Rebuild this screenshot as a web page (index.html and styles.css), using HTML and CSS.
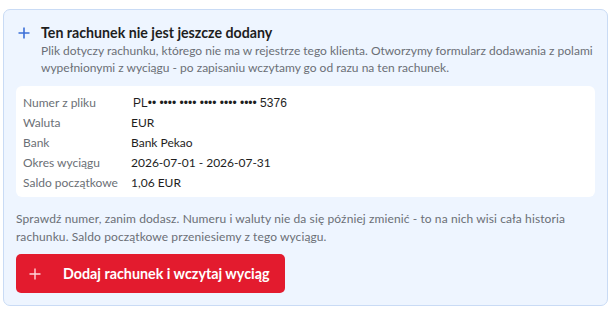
FILE: index.html
```html
<!DOCTYPE html>
<html lang="pl">
<head>
<meta charset="utf-8">
<link rel="stylesheet" href="styles.css">
</head>
<body>
<div class="card">
  <div class="head">
    <svg class="head-icon" width="12" height="12" viewBox="0 0 12 12"><path d="M6 0.5v11M0.5 6h11" stroke="#3b6fd8" stroke-width="1.6" fill="none"/></svg>
    <div class="head-text">
      <div class="title">Ten rachunek nie jest jeszcze dodany</div>
      <p class="desc">Plik dotyczy rachunku, którego nie ma w rejestrze tego klienta. Otworzymy formularz dodawania z polami wypełnionymi z wyciągu - po zapisaniu wczytamy go od razu na ten rachunek.</p>
    </div>
  </div>
  <div class="details">
    <div class="label">Numer z pliku</div><div class="value mono">PL•• •••• •••• •••• •••• •••• 5376</div>
    <div class="label">Waluta</div><div class="value">EUR</div>
    <div class="label">Bank</div><div class="value">Bank Pekao</div>
    <div class="label">Okres wyciągu</div><div class="value">2026-07-01 - 2026-07-31</div>
    <div class="label">Saldo początkowe</div><div class="value">1,06 EUR</div>
  </div>
  <p class="note">Sprawdź numer, zanim dodasz. Numeru i waluty nie da się później zmienić - to na nich wisi cała historia rachunku. Saldo początkowe przeniesiemy z tego wyciągu.</p>
  <button class="btn" type="button">
    <svg width="12" height="12" viewBox="0 0 12 12"><path d="M6 0.5v11M0.5 6h11" stroke="#ffd6da" stroke-width="1.4" fill="none"/></svg>
    <span>Dodaj rachunek i wczytaj wyciąg</span>
  </button>
</div>
</body>
</html>
```
FILE: styles.css
```css
* { box-sizing: border-box; }
html, body { margin: 0; padding: 0; background: #ffffff; }
body {
  padding: 9px 2px 0 3px;
  font-family: "Lato", "Open Sans", sans-serif;
  color: #2b2b2b;
}
.card {
  width: 605px;
  height: 297px;
  background: #eef5ff;
  border: 1px solid #c9dbf5;
  border-radius: 7px;
  padding: 13px 12px 12px 12px;
}
.head {
  display: flex;
  align-items: flex-start;
  gap: 11px;
  padding-left: 2px;
}
.head-icon { margin-top: 4px; flex: none; }
.title {
  font-size: 14.2px;
  font-weight: 700;
  color: #1e1e1e;
  line-height: 19px;
}
.desc {
  margin: 0;
  font-size: 12px;
  line-height: 17px;
  color: #6b6f76;
}
.details {
  margin-top: 10px;
  background: #ffffff;
  border-radius: 6px;
  padding: 7px 7px 4px;
  display: grid;
  grid-template-columns: 108px 1fr;
  font-size: 12px;
  line-height: 20px;
}
.label { color: #6b6f76; }
.value { color: #1e1e1e; }
.mono { font-family: "Liberation Sans", Arial, sans-serif; font-size: 12px; padding-left: 2px; }
.note {
  margin: 13px 0 0;
  font-size: 12px;
  letter-spacing: 0.1px;
  line-height: 18px;
  color: #6b6f76;
}
.btn {
  margin-top: 8px;
  width: 269px;
  height: 39px;
  background: #e31b2e;
  border: none;
  border-radius: 5px;
  display: flex;
  align-items: center;
  gap: 22px;
  padding: 0 0 0 13px;
  font-family: inherit;
  font-size: 14.3px;
  font-weight: 700;
  color: #ffffff;
  white-space: nowrap;
}
```
